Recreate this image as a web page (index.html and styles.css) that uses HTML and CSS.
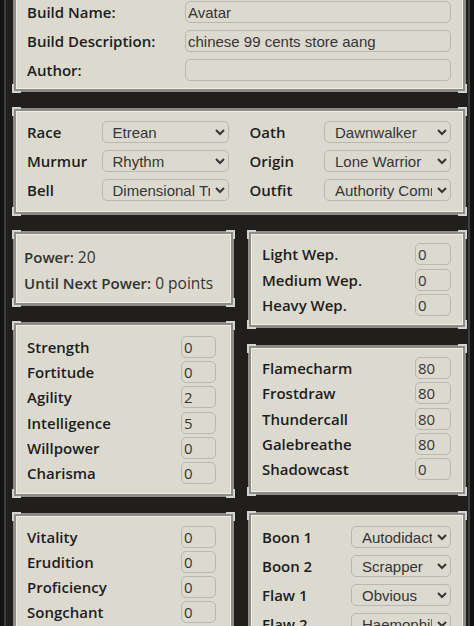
FILE: index.html
```html
<!DOCTYPE html>
<html lang="en">
<head>
  <meta charset="UTF-8" />
  <meta name="viewport" content="width=device-width, initial-scale=1.0" />
  <title>Build Sheet – Avatar</title>

  <!-- parchment panels on a dark board -->
  <link rel="stylesheet" href="styles.css">
</head>
<body>

<div class="frame">

  <!-- build header fields -->
  <section class="panel info">
    <label class="field"><span>Build Name:</span><input type="text" value="Avatar"></label>
    <label class="field"><span>Build Description:</span><input type="text" value="chinese 99 cents store aang"></label>
    <label class="field"><span>Author:</span><input type="text" value=""></label>
  </section>

  <!-- race / oath etc. – grid flows row by row -->
  <section class="panel picks">
    <label class="pick"><span>Race</span><select><option>Etrean</option></select></label>
    <label class="pick"><span>Oath</span><select><option>Dawnwalker</option></select></label>
    <label class="pick"><span>Murmur</span><select><option>Rhythm</option></select></label>
    <label class="pick"><span>Origin</span><select><option>Lone Warrior</option></select></label>
    <label class="pick"><span>Bell</span><select><option>Dimensional Travel</option></select></label>
    <label class="pick"><span>Outfit</span><select><option>Authority Commander</option></select></label>
  </section>

  <div class="cols">
    <div class="col left">
      <section class="panel power">
        <p><b>Power:</b> 20</p>
        <p><b>Until Next Power:</b> 0 points</p>
      </section>

      <section class="panel stats base">
        <label class="stat"><span>Strength</span><input class="num" type="number" value="0"></label>
        <label class="stat"><span>Fortitude</span><input class="num" type="number" value="0"></label>
        <label class="stat"><span>Agility</span><input class="num" type="number" value="2"></label>
        <label class="stat"><span>Intelligence</span><input class="num" type="number" value="5"></label>
        <label class="stat"><span>Willpower</span><input class="num" type="number" value="0"></label>
        <label class="stat"><span>Charisma</span><input class="num" type="number" value="0"></label>
      </section>

      <section class="panel stats misc">
        <label class="stat"><span>Vitality</span><input class="num" type="number" value="0"></label>
        <label class="stat"><span>Erudition</span><input class="num" type="number" value="0"></label>
        <label class="stat"><span>Proficiency</span><input class="num" type="number" value="0"></label>
        <label class="stat"><span>Songchant</span><input class="num" type="number" value="0"></label>
      </section>
    </div>

    <div class="col right">
      <section class="panel stats weps">
        <label class="stat"><span>Light Wep.</span><input class="num" type="number" value="0"></label>
        <label class="stat"><span>Medium Wep.</span><input class="num" type="number" value="0"></label>
        <label class="stat"><span>Heavy Wep.</span><input class="num" type="number" value="0"></label>
      </section>

      <section class="panel stats attune">
        <label class="stat"><span>Flamecharm</span><input class="num" type="number" value="80"></label>
        <label class="stat"><span>Frostdraw</span><input class="num" type="number" value="80"></label>
        <label class="stat"><span>Thundercall</span><input class="num" type="number" value="80"></label>
        <label class="stat"><span>Galebreathe</span><input class="num" type="number" value="80"></label>
        <label class="stat"><span>Shadowcast</span><input class="num" type="number" value="0"></label>
      </section>

      <section class="panel boons">
        <label class="pick"><span>Boon 1</span><select><option>Autodidact</option></select></label>
        <label class="pick"><span>Boon 2</span><select><option>Scrapper</option></select></label>
        <label class="pick"><span>Flaw 1</span><select><option>Obvious</option></select></label>
        <label class="pick"><span>Flaw 2</span><select><option>Haemophiliac</option></select></label>
      </section>
    </div>
  </div>

</div>

</body>
</html>
```

FILE: styles.css
```css
:root   { --panel:#dcdacf; --ink:#1d1d1d; --edge:#8e8c87; --field:#bab8ae; }
*       { box-sizing:border-box; margin:0; padding:0; }
body    { background:#121212; font-family:'Open Sans',sans-serif; color:var(--ink); }
.frame  { margin:0 4px; min-height:100vh; padding:0 2px 40px 7px; background:#201f1d;
          border-left:2px solid #3e3e3c; border-right:2px solid #3e3e3c; }

/* parchment panel with little silver corner brackets */
.panel  { position:relative; background:var(--panel); border:3px solid var(--edge);
          box-shadow:inset 0 0 0 1px #eeede6; }
.panel::before { content:''; position:absolute; inset:-4px; pointer-events:none;
          background:
            linear-gradient(#d4d4d4,#d4d4d4) left top / 9px 2px no-repeat,
            linear-gradient(#d4d4d4,#d4d4d4) left top / 2px 9px no-repeat,
            linear-gradient(#d4d4d4,#d4d4d4) right top / 9px 2px no-repeat,
            linear-gradient(#d4d4d4,#d4d4d4) right top / 2px 9px no-repeat,
            linear-gradient(#d4d4d4,#d4d4d4) left bottom / 9px 2px no-repeat,
            linear-gradient(#d4d4d4,#d4d4d4) left bottom / 2px 9px no-repeat,
            linear-gradient(#d4d4d4,#d4d4d4) right bottom / 9px 2px no-repeat,
            linear-gradient(#d4d4d4,#d4d4d4) right bottom / 2px 9px no-repeat; }

label span, .power b { font-size:15px; font-weight:600; }

input, select { height:22px; background:var(--panel); border:1px solid var(--field);
          border-radius:5px; color:#353535; outline:none; }
input[type=text], select { font:15px 'Liberation Sans',Arial,sans-serif; }
input[type=text] { padding:0 2px; }
select  { padding:0 2px 0 6px; width:100%; }

/* header block */
.info   { margin-top:-12px; padding:10px 12px 8px 11px; display:grid; row-gap:7px; }
.field  { display:grid; grid-template-columns:158px 1fr; align-items:center; }

/* dropdown grid */
.picks  { margin-top:16px; padding:10px 12px 11px 11px; display:grid;
          grid-template-columns:1fr 1fr; column-gap:21px; row-gap:7px; }
.pick   { display:grid; grid-template-columns:1fr 127px; align-items:center; }

/* two stacked columns */
.cols   { margin-top:16px; display:grid; grid-template-columns:221px 1fr; column-gap:14px; align-items:start; }
.col    { display:flex; flex-direction:column; gap:16px; }
.right  { gap:17px; }

.power  { padding:10px 8px 7px; line-height:26px; font-size:15.5px; color:#333; }

.stats  { display:grid; }
.stat   { display:grid; grid-template-columns:1fr 35px; align-items:center; }
.num    { width:100%; font:15px 'Open Sans',sans-serif; padding-left:2px; -moz-appearance:textfield; }
.num::-webkit-inner-spin-button, .num::-webkit-outer-spin-button { -webkit-appearance:none; margin:0; }

.base   { padding:11px 15px 10px 11px; row-gap:3.2px; }
.misc   { padding:10px 15px 10px 11px; row-gap:3px; }
.weps   { padding:9px 12px 9px 11px; row-gap:3.5px; }
.attune { padding:9px 12px 12px 11px; row-gap:3.25px; }
.weps .stat, .attune .stat { grid-template-columns:1fr 36px; }

.boons  { padding:11px 12px 11px 11px; display:grid; row-gap:7px; }
.boons .pick { grid-template-columns:1fr 100px; }
```
